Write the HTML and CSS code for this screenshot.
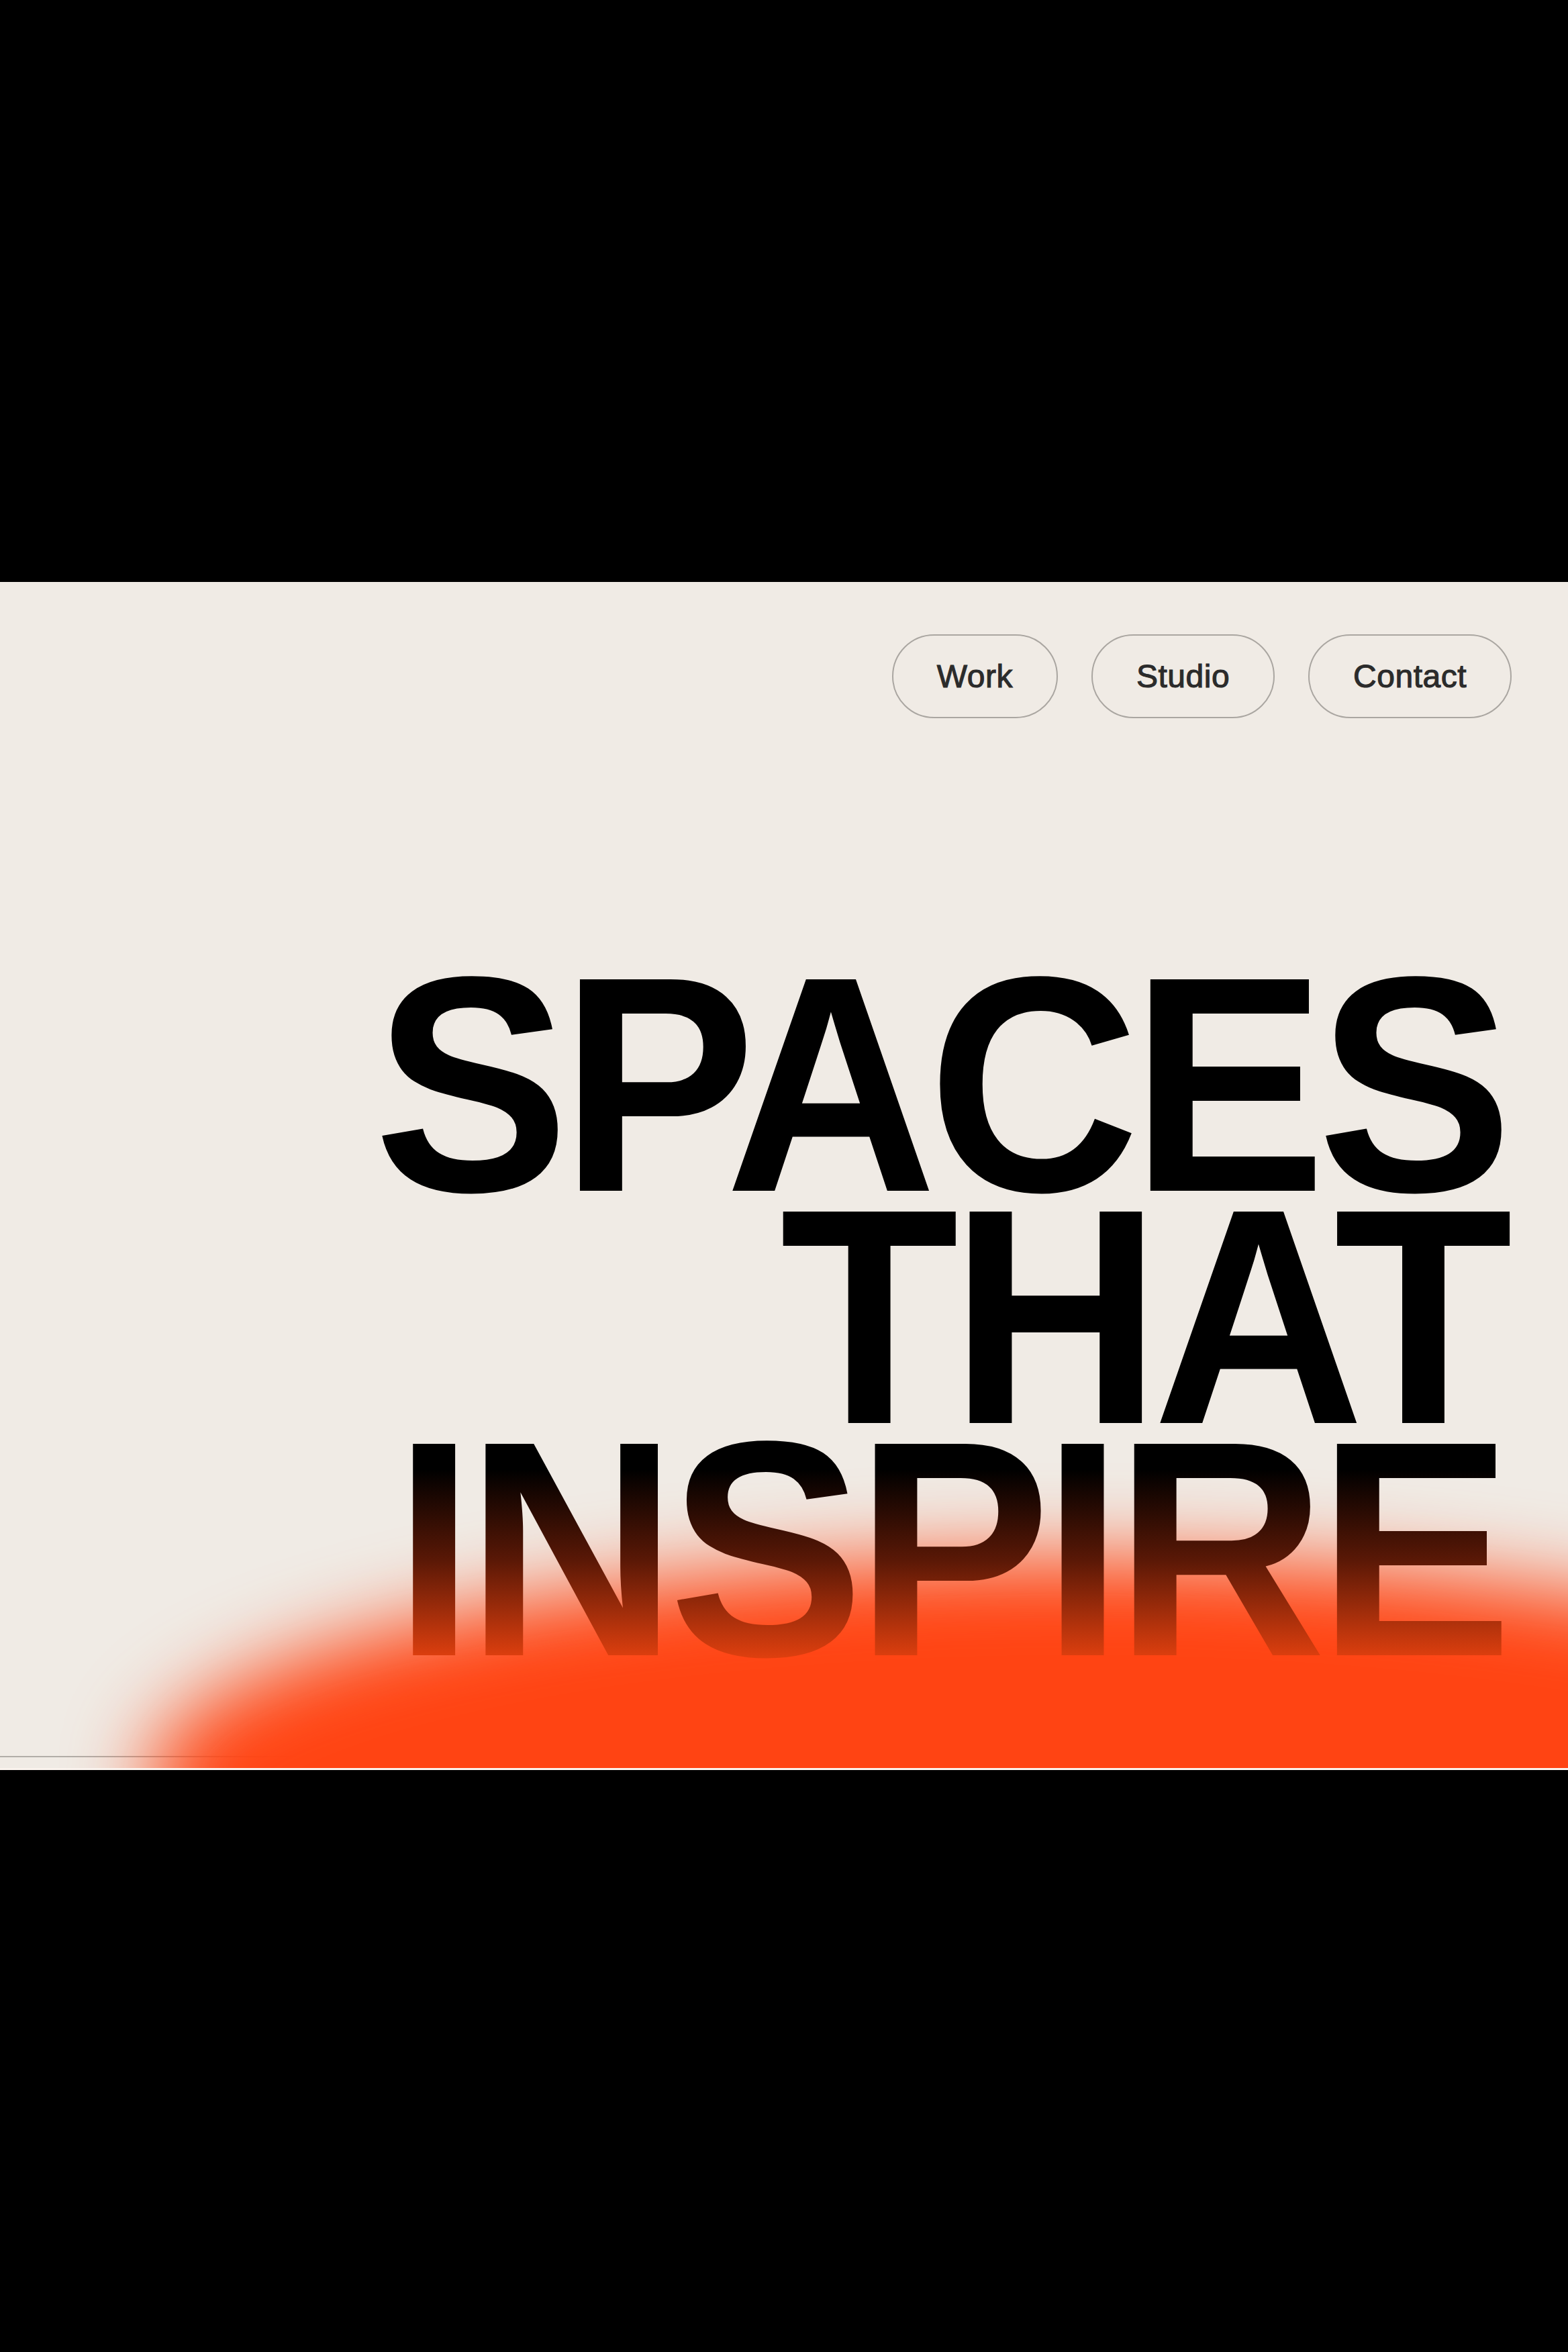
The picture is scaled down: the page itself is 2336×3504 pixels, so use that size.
FILE: index.html
```html
<!DOCTYPE html>
<html lang="en">
<head>
<meta charset="utf-8">
<title>Spaces That Inspire</title>
<link rel="stylesheet" href="styles.css">
</head>
<body>
  <section class="hero">
    <div class="blob" aria-hidden="true"></div>
    <nav class="nav">
      <a class="pill" href="#work">Work</a>
      <a class="pill" href="#studio">Studio</a>
      <a class="pill" href="#contact">Contact</a>
    </nav>
    <h1 class="headline">
      <span class="line">SPACES</span>
      <span class="line">THAT</span>
      <span class="line">INSPIRE</span>
    </h1>
    <div class="spacer"></div>
    <div class="rule"></div>
  </section>
</body>
</html>
```
FILE: styles.css
```css
html, body {
  margin: 0;
  padding: 0;
}
body {
  background: #000;
  height: 3504px;
  display: flex;
  align-items: center;
}
.hero {
  position: relative;
  width: 100%;
  height: 1770px;
  box-sizing: border-box;
  background: #f0ebe5;
  border-bottom: 3px solid #fbf3ee;
  overflow: hidden;
  display: flex;
  flex-direction: column;
}
.blob {
  position: absolute;
  left: 220px;
  top: 1455px;
  width: 2760px;
  height: 660px;
  border-radius: 50%;
  background: #ff4413;
  filter: blur(60px);
  z-index: 1;
}
.nav {
  position: relative;
  z-index: 2;
  display: flex;
  justify-content: flex-end;
  gap: 50px;
  padding: 78px 84px 0 0;
}
.pill {
  display: flex;
  align-items: center;
  justify-content: center;
  box-sizing: border-box;
  height: 125px;
  padding: 0 65px;
  border: 2px solid #aaa6a1;
  border-radius: 999px;
  font-family: "Liberation Sans", Arial, sans-serif;
  font-size: 48px;
  letter-spacing: 0.5px;
  color: #2b2b2b;
  -webkit-text-stroke: 1.1px #2b2b2b;
  text-decoration: none;
}
.headline {
  position: relative;
  z-index: 2;
  margin: 372px 0 0 0;
  padding-right: 100px;
  text-align: right;
  font-family: "Liberation Sans", Arial, sans-serif;
  font-weight: 700;
  font-size: 458px;
  line-height: 346px;
  letter-spacing: -0.03em;
  transform: scaleX(0.953);
  transform-origin: right center;
  background: linear-gradient(to bottom, #000 0%, #000 72%, #5a1806 85%, #e8420f 100%);
  -webkit-background-clip: text;
  background-clip: text;
  color: transparent;
}
.line {
  display: block;
}
.spacer {
  flex: 1;
}
.rule {
  height: 2px;
  background: #b2aea8;
  margin-bottom: 16px;
}
```
